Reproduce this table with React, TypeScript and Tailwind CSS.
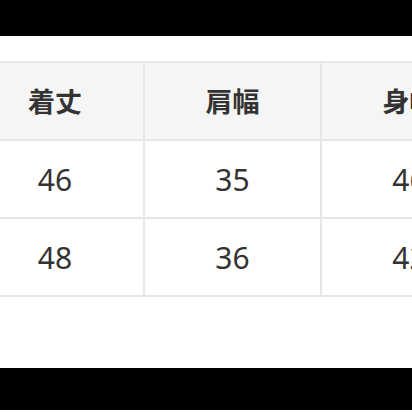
const HEAD = ["着丈", "肩幅", "身幅"];
const ROWS = [
  ["46", "35", "46"],
  ["48", "36", "42"],
];

export default function App() {
  return (
    <div className="w-[412px] h-[412px] overflow-hidden bg-white flex flex-col">
      <div className="h-[36px] bg-black shrink-0" />
      <div className="h-[25px] shrink-0" />
      <div className="ml-[-33px] w-[540px] border-t-2 border-[#e8e8e8]">
        <div className="grid grid-cols-[178px_177px_177px] bg-[#f5f5f5]">
          {HEAD.map((h) => (
            <div
              key={h}
              className="h-[78px] flex items-center justify-center border-r-2 border-b-2 border-[#e6e6e6] text-[27px] font-bold text-[#333] [font-family:'Noto_Sans_CJK_JP',sans-serif]"
            >
              {h}
            </div>
          ))}
        </div>
        {ROWS.map((r, i) => (
          <div key={i} className="grid grid-cols-[178px_177px_177px]">
            {r.map((v, j) => (
              <div
                key={j}
                className="h-[78px] flex items-center justify-center border-r-2 border-b-2 border-[#e6e6e6] text-[30px] text-[#333] [font-family:'Noto_Sans',sans-serif]"
              >
                {v}
              </div>
            ))}
          </div>
        ))}
      </div>
      <div className="flex-1" />
      <div className="h-[42px] bg-black shrink-0" />
      <div className="h-[2px] shrink-0" />
    </div>
  );
}
